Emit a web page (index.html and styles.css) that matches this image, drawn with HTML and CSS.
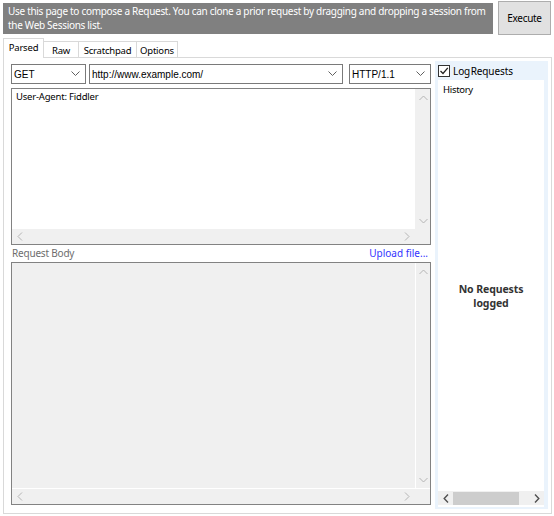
FILE: index.html
```html
<!DOCTYPE html>
<html>
<head>
<meta charset="utf-8">
<link rel="stylesheet" href="styles.css">
</head>
<body>
<div class="top">
  <div class="banner">Use this page to compose a Request. You can clone a prior request by dragging and dropping a session from<br>the Web Sessions list.</div>
  <div class="execute">Execute</div>
</div>
<div class="tabs">
  <div class="tab active">Parsed</div>
  <div class="tab">Raw</div>
  <div class="tab">Scratchpad</div>
  <div class="tab">Options</div>
</div>
<div class="page">
  <div class="left">
    <div class="controls">
      <div class="combo c-method"><span>GET</span><svg class="dd" width="9" height="6" viewBox="0 0 9 6"><path d="M0.5 0.5 L4.5 4.5 L8.5 0.5" fill="none" stroke="#606060" stroke-width="1"/></svg></div>
      <div class="combo c-url"><span>http://www.example.com/</span><svg class="dd" width="9" height="6" viewBox="0 0 9 6"><path d="M0.5 0.5 L4.5 4.5 L8.5 0.5" fill="none" stroke="#606060" stroke-width="1"/></svg></div>
      <div class="combo c-ver"><span>HTTP/1.1</span><svg class="dd" width="9" height="6" viewBox="0 0 9 6"><path d="M0.5 0.5 L4.5 4.5 L8.5 0.5" fill="none" stroke="#606060" stroke-width="1"/></svg></div>
    </div>
    <div class="box headers">
      <div class="box-main">
        <div class="box-text">User-Agent: Fiddler</div>
        <div class="vscroll">
          <svg width="9" height="6" viewBox="0 0 9 6"><path d="M0.5 5 L4.5 1 L8.5 5" fill="none" stroke="#b4b4b4"/></svg>
          <svg width="9" height="6" viewBox="0 0 9 6"><path d="M0.5 1 L4.5 5 L8.5 1" fill="none" stroke="#b4b4b4"/></svg>
        </div>
      </div>
      <div class="hscroll-row">
        <div class="hscroll">
          <svg width="6" height="9" viewBox="0 0 6 9"><path d="M5 0.5 L1 4.5 L5 8.5" fill="none" stroke="#b4b4b4"/></svg>
          <svg width="6" height="9" viewBox="0 0 6 9"><path d="M1 0.5 L5 4.5 L1 8.5" fill="none" stroke="#b4b4b4"/></svg>
        </div>
        <div class="corner"></div>
      </div>
    </div>
    <div class="body-label">
      <span class="lbl">Request Body</span>
      <span class="upload">Upload file...</span>
    </div>
    <div class="box reqbody">
      <div class="box-main">
        <div class="box-text"></div>
        <div class="vscroll sep">
          <svg width="9" height="6" viewBox="0 0 9 6"><path d="M0.5 5 L4.5 1 L8.5 5" fill="none" stroke="#b4b4b4"/></svg>
          <svg width="9" height="6" viewBox="0 0 9 6"><path d="M0.5 1 L4.5 5 L8.5 1" fill="none" stroke="#b4b4b4"/></svg>
        </div>
      </div>
      <div class="hscroll-row sep">
        <div class="hscroll">
          <svg width="6" height="9" viewBox="0 0 6 9"><path d="M5 0.5 L1 4.5 L5 8.5" fill="none" stroke="#b4b4b4"/></svg>
          <svg width="6" height="9" viewBox="0 0 6 9"><path d="M1 0.5 L5 4.5 L1 8.5" fill="none" stroke="#b4b4b4"/></svg>
        </div>
        <div class="corner"></div>
      </div>
    </div>
  </div>
  <div class="right">
    <div class="log">
      <span class="check"><svg width="10" height="10" viewBox="0 0 10 10"><path d="M1.5 5 L4 7.5 L8.8 1.8" fill="none" stroke="#222" stroke-width="1.3"/></svg></span>
      <span class="log-text">Log Requests</span>
    </div>
    <div class="history">
      <div class="hist-title">History</div>
      <div class="empty">No Requests<br>logged</div>
      <div class="hs">
        <svg width="6" height="9" viewBox="0 0 6 9"><path d="M5 0.5 L1.2 4.5 L5 8.5" fill="none" stroke="#505050" stroke-width="1.4"/></svg>
        <div class="thumb"></div>
        <svg width="6" height="9" viewBox="0 0 6 9"><path d="M1 0.5 L4.8 4.5 L1 8.5" fill="none" stroke="#505050" stroke-width="1.4"/></svg>
      </div>
    </div>
  </div>
</div>
</body>
</html>
```
FILE: styles.css
```css
* { box-sizing: border-box; }
html, body { margin: 0; padding: 0; }
body {
  width: 554px;
  height: 516px;
  background: #ffffff;
  font-family: "Noto Sans", "Open Sans", sans-serif;
  font-size: 10px;
  letter-spacing: -0.2px;
  color: #000;
  overflow: hidden;
}
.top {
  display: flex;
  align-items: flex-start;
  padding: 1px 3px 0 3px;
  gap: 5px;
}
.banner {
  margin-top: 2px;
  width: 490px;
  height: 31px;
  background: #808080;
  color: #ffffff;
  padding: 2px 2px 0 5px;
  line-height: 13.6px;
  font-size: 10px;
  letter-spacing: -0.3px;
  white-space: nowrap;
  overflow: hidden;
}
.execute {
  width: 53px;
  height: 34px;
  background: #e1e1e1;
  border: 1px solid #adadad;
  display: flex;
  align-items: center;
  justify-content: center;
  font-size: 10px;
  letter-spacing: -0.3px;
}
.tabs {
  display: flex;
  align-items: flex-end;
  padding-left: 4px;
  margin-top: 3px;
  height: 19px;
  position: relative;
  z-index: 2;
}
.tab {
  height: 16px;
  border: 1px solid #d9d9d9;
  border-bottom: none;
  background: #ffffff;
  display: flex;
  align-items: center;
  justify-content: center;
  font-size: 9.5px;
  letter-spacing: -0.2px;
  margin-right: -1px;
  padding-top: 1px;
}
.tab:nth-child(1) { width: 41px; }
.tab:nth-child(2) { width: 36px; }
.tab:nth-child(3) { width: 59px; }
.tab:nth-child(4) { width: 42px; }
.tab.active {
  height: 20px;
  margin-bottom: -1px;
  margin-left: -1px;
  padding-bottom: 3px;
}
.page {
  margin-left: 3px;
  width: 549px;
  height: 457px;
  border: 1px solid #d9d9d9;
  background: #ffffff;
  display: flex;
  padding: 3px 3px 0 7px;
  gap: 4px;
}
.left {
  width: 420px;
  display: flex;
  flex-direction: column;
  padding-top: 3px;
}
.controls {
  display: flex;
  height: 20px;
}
.combo {
  height: 20px;
  border: 1px solid #7a7a7a;
  background: #fff;
  display: flex;
  align-items: center;
  justify-content: space-between;
  padding: 0 5px 0 2px;
  font-family: "Liberation Sans", Arial, sans-serif;
  font-size: 10px;
  letter-spacing: 0;
}
.c-method { width: 75px; }
.c-url { width: 254px; margin-left: 3px; }
.c-ver { width: 82px; margin-left: 6px; }
.box {
  border: 1px solid #828282;
  display: flex;
  flex-direction: column;
}
.headers {
  margin-top: 4px;
  height: 157px;
}
.box-main {
  flex: 1;
  display: flex;
}
.box-text {
  flex: 1;
  padding: 1px 4px;
  font-size: 9.5px;
  line-height: 13px;
}
.headers .box-text { background: #fff; }
.reqbody { background: #f0f0f0; height: 243px; }
.vscroll {
  width: 15px;
  background: #f0f0f0;
  display: flex;
  flex-direction: column;
  justify-content: space-between;
  align-items: center;
  padding: 6px 0 5px 1px;
}
.vscroll.sep { border-left: 1px solid #ffffff; }
.hscroll-row {
  height: 15px;
  display: flex;
}
.hscroll-row.sep { border-top: 1px solid #ffffff; height: 16px; }
.hscroll {
  flex: 1;
  background: #f0f0f0;
  display: flex;
  align-items: center;
  justify-content: space-between;
  padding: 0 5px 0 5px;
}
.corner { width: 15px; background: #f0f0f0; }
.body-label {
  height: 17px;
  display: flex;
  justify-content: space-between;
  align-items: center;
  padding: 0 3px 1px 1px;
  font-size: 10px;
}
.lbl { color: #6d6d6d; }
.upload { color: #3232ff; letter-spacing: 0; }
.right {
  width: 113px;
  height: 448px;
  background: #eaf3fc;
  display: flex;
  flex-direction: column;
  padding: 0 4px 2px 3px;
}
.log {
  height: 19px;
  display: flex;
  align-items: center;
  gap: 3px;
  padding-top: 1px;
}
.check {
  width: 12px;
  height: 12px;
  border: 1px solid #333;
  background: #fff;
  display: flex;
  align-items: center;
  justify-content: center;
}
.log-text { font-size: 10px; word-spacing: -2px; letter-spacing: -0.1px; }
.history {
  flex: 1;
  background: #fff;
  display: flex;
  flex-direction: column;
}
.hist-title {
  padding: 3px 5px;
  font-size: 9.5px;
  line-height: 13px;
  letter-spacing: -0.3px;
}
.empty {
  flex: 1;
  display: flex;
  align-items: center;
  justify-content: center;
  text-align: center;
  font-weight: bold;
  font-size: 10.5px;
  letter-spacing: -0.1px;
  line-height: 14px;
  color: #333;
  padding-top: 2px;
}
.hs {
  height: 14px;
  margin-bottom: 2px;
  background: #f0f0f0;
  display: flex;
  align-items: center;
  padding: 0 4px 0 5px;
}
.thumb {
  width: 66px;
  height: 13px;
  background: #cdcdcd;
  margin: 0 auto 0 4px;
}
```
